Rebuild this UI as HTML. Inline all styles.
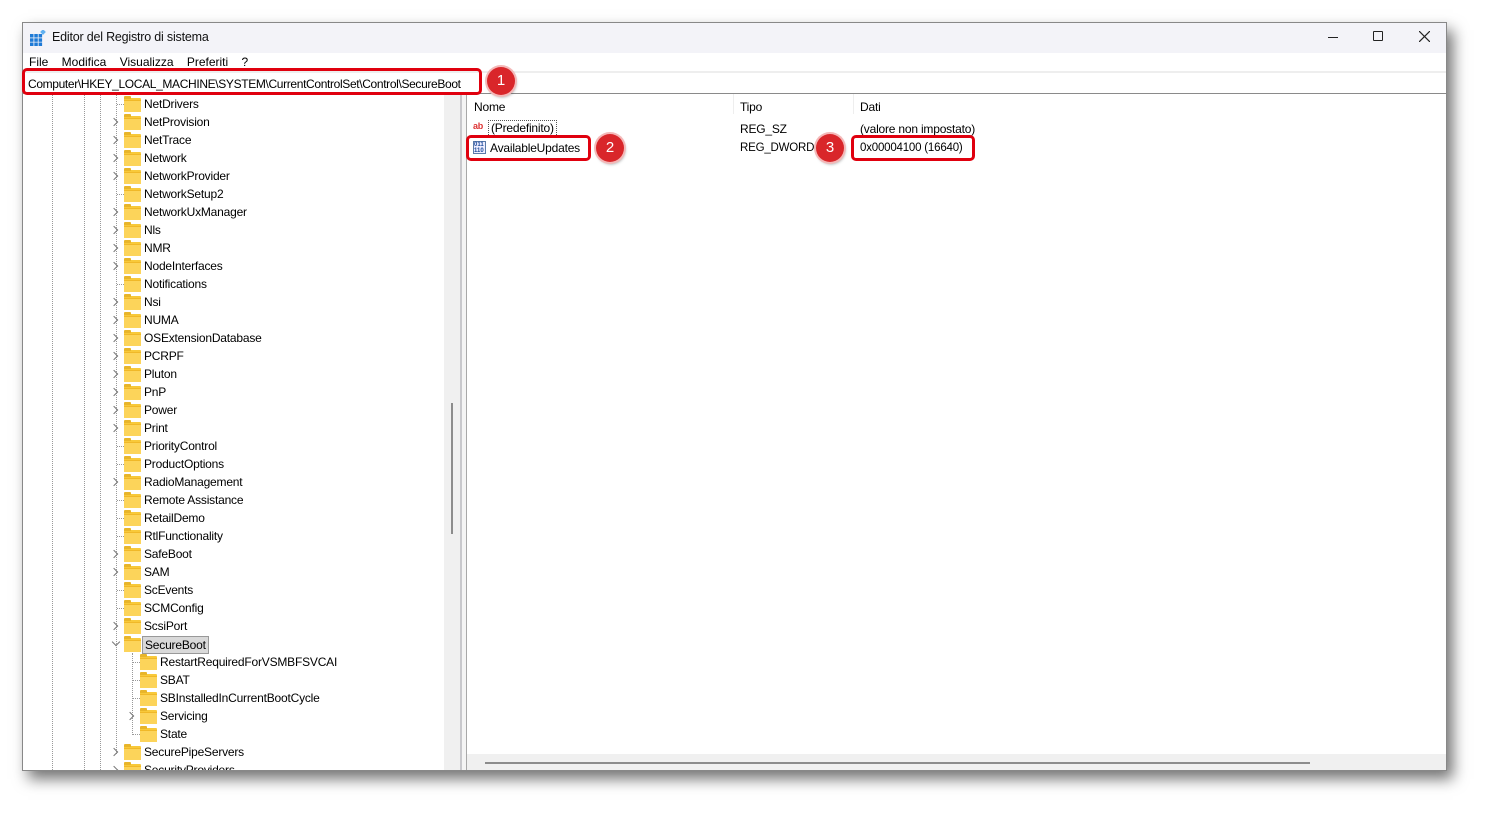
<!DOCTYPE html>
<html><head><meta charset="utf-8"><style>
*{margin:0;padding:0;box-sizing:border-box}
body{width:1490px;height:815px;background:#fff;position:relative;overflow:hidden;font-family:"Liberation Sans",sans-serif;font-size:12px;color:#000;letter-spacing:-0.2px}
.win{position:absolute;left:22px;top:22px;width:1425px;height:749px;background:#fff;box-shadow:6px 8px 14px rgba(0,0,0,.55);border:1px solid #888;overflow:hidden}
.abs{position:absolute}
.title{left:0;top:0;width:100%;height:30px;background:#f3f3f8}
.row{position:absolute;height:18px;line-height:18px;white-space:nowrap}
.fold{position:absolute;width:17px;height:13px;background:#f8c93a;border-radius:1px}
.fold:before{content:"";position:absolute;left:0;top:-2px;width:7px;height:3px;background:#e8b52a;border-radius:1px 1px 0 0}
.fold:after{content:"";position:absolute;left:0;top:2px;width:17px;height:11px;background:#fcd45a;border-top:1px solid #f0b828}
.arr{position:absolute;width:6px;height:6px;border-right:1px solid #777;border-bottom:1px solid #777;transform:rotate(-45deg)}
.vd{position:absolute;width:0;border-left:1px dotted #999}
.hd{position:absolute;height:0;width:7px;border-top:1px dotted #999}
.red{position:absolute;border:3px solid #e0000e;border-radius:5px}
.num{position:absolute;width:28px;height:28px;border-radius:50%;background:#d9262a;color:#fff;font-size:15px;text-align:center;line-height:28px;box-shadow:0 0 0 2px #f4b8b8,1px 2px 3px rgba(0,0,0,.4);letter-spacing:0}
</style></head><body>
<div class="win">
 <div class="abs title"></div>
 <svg class="abs" style="left:7px;top:7px" width="16" height="16" viewBox="0 0 16 16"><g fill="#1e7ad6"><rect x="0" y="4" width="3.5" height="3.5"/><rect x="4.3" y="4" width="3.5" height="3.5"/><rect x="8.6" y="4" width="3.5" height="3.5"/><rect x="0" y="8.3" width="3.5" height="3.5"/><rect x="4.3" y="8.3" width="3.5" height="3.5"/><rect x="8.6" y="8.3" width="3.5" height="3.5"/><rect x="0" y="12.5" width="3.5" height="3.5"/><rect x="4.3" y="12.5" width="3.5" height="3.5"/><rect x="8.6" y="12.5" width="3.5" height="3.5"/></g><rect x="11" y="0" width="4" height="4" fill="#5fb0f0" transform="rotate(45 13 2)"/></svg>
 <div class="abs" style="left:29px;top:7px;font-size:12.5px;color:#111">Editor del Registro di sistema</div>
 <div class="abs" style="left:1305px;top:14px;width:10px;height:1px;background:#222"></div>
 <div class="abs" style="left:1350px;top:8px;width:10px;height:10px;border:1px solid #222;border-radius:1px"></div>
 <svg class="abs" style="left:1396px;top:8px" width="11" height="11"><path d="M0 0L11 11M11 0L0 11" stroke="#222" stroke-width="1.2"/></svg>
 <div class="abs" style="left:6px;top:32px;font-size:12px;letter-spacing:0">File&nbsp;&nbsp;&nbsp;&nbsp;Modifica&nbsp;&nbsp;&nbsp;&nbsp;Visualizza&nbsp;&nbsp;&nbsp;&nbsp;Preferiti&nbsp;&nbsp;&nbsp;&nbsp;?</div>
 <div class="abs" style="left:0;top:48px;width:100%;height:2px;background:#eee"></div>
 <div class="abs" style="left:5px;top:54px;font-size:12px;letter-spacing:-0.35px">Computer\HKEY_LOCAL_MACHINE\SYSTEM\CurrentControlSet\Control\SecureBoot</div>
 <div class="abs" style="left:0;top:70px;width:100%;height:1px;background:#8a8a8a"></div>
 <div class="abs" style="left:421px;top:71px;width:16px;height:678px;background:#f0f0f0"></div>
 <div class="abs" style="left:428px;top:380px;width:2px;height:131px;background:#8c8c8c"></div>
 <div class="abs" style="left:437px;top:71px;width:2px;height:678px;background:#c8c8cc"></div>
 <div class="abs" style="left:439px;top:71px;width:4px;height:678px;background:#f4f4f4"></div>
 <div class="abs" style="left:443px;top:71px;width:1px;height:678px;background:#a8a8a8"></div>
 <div class="abs" style="left:444px;top:731px;width:981px;height:18px;background:#f0f0f0"></div>
 <div class="abs" style="left:462px;top:739px;width:825px;height:2px;background:#8c8c8c"></div>
 <div class="vd" style="left:29px;top:71px;height:678px"></div>
 <div class="vd" style="left:61px;top:71px;height:678px"></div>
 <div class="vd" style="left:77px;top:71px;height:678px"></div>
 <div class="vd" style="left:93px;top:71px;height:660px"></div>
 <div class="vd" style="left:109px;top:630px;height:82px"></div>
 <div id="tree"></div>
 <div class="abs" style="left:451px;top:77px">Nome</div>
 <div class="abs" style="left:710px;top:71px;width:1px;height:20px;background:#eee"></div>
 <div class="abs" style="left:717px;top:77px">Tipo</div>
 <div class="abs" style="left:830px;top:71px;width:1px;height:20px;background:#eee"></div>
 <div class="abs" style="left:837px;top:77px">Dati</div>
 <div class="abs" style="left:450px;top:98px;font-size:9px;font-weight:bold;color:#d33;line-height:10px">ab</div>
 <div class="abs" style="left:465px;top:97px;border:1px dotted #555;padding:0 2px;line-height:15px">(Predefinito)</div>
 <div class="abs" style="left:717px;top:99px">REG_SZ</div>
 <div class="abs" style="left:837px;top:99px">(valore non impostato)</div>
 <div class="abs" style="left:450px;top:118px;width:13px;height:13px;border:1px solid #5a7aa8;font-size:6px;line-height:6px;color:#1a4a9a;font-weight:bold;background:#eef;letter-spacing:0">011<br>110</div>
 <div class="abs" style="left:467px;top:118px">AvailableUpdates</div>
 <div class="abs" style="left:717px;top:119px;font-size:11.5px">REG_DWORD</div>
 <div class="abs" style="left:837px;top:119px;font-size:11.5px">0x00004100 (16640)</div>
</div>
<div class="red" style="left:22px;top:68px;width:460px;height:27px"></div>
<div class="num" style="left:487px;top:67px">1</div>
<div class="red" style="left:466px;top:135px;width:125px;height:26px"></div>
<div class="num" style="left:596px;top:134px">2</div>
<div class="num" style="left:816px;top:134px">3</div>
<div class="red" style="left:851px;top:135px;width:124px;height:26px"></div>
<script>
var rows=[["NetDrivers",0],["NetProvision",1],["NetTrace",1],["Network",1],["NetworkProvider",1],["NetworkSetup2",0],["NetworkUxManager",1],["Nls",1],["NMR",1],["NodeInterfaces",1],["Notifications",0],["Nsi",1],["NUMA",1],["OSExtensionDatabase",1],["PCRPF",1],["Pluton",1],["PnP",1],["Power",1],["Print",1],["PriorityControl",0],["ProductOptions",0],["RadioManagement",1],["Remote Assistance",0],["RetailDemo",0],["RtlFunctionality",0],["SafeBoot",1],["SAM",1],["ScEvents",0],["SCMConfig",0],["ScsiPort",1],["SecureBoot",2],["RestartRequiredForVSMBFSVCAI",0,1],["SBAT",0,1],["SBInstalledInCurrentBootCycle",0,1],["Servicing",1,1],["State",0,1],["SecurePipeServers",1],["SecurityProviders",1]];
var h="";
rows.forEach(function(r,i){var t=72+18*i,o=r[2]?16:0,c=t+9;
 h+='<div class="fold" style="left:'+(101+o)+'px;top:'+(t+3)+'px"></div>';
 if(r[1]==1)h+='<div class="arr" style="left:'+(88+o)+'px;top:'+(c-3)+'px"></div>';
 else if(r[1]==2)h+='<div class="arr" style="left:90px;top:'+(c-5)+'px;transform:rotate(45deg)"></div>';
 else h+='<div class="hd" style="left:'+(94+o)+'px;top:'+c+'px"></div>';
 var st=r[1]==2?'background:#d9d9d9;border:1px solid #999;padding:0 2px;left:'+(119+o)+'px;line-height:16px;top:'+(t+1)+'px':'left:'+(121+o)+'px;top:'+t+'px';
 h+='<div class="row" style="'+st+'">'+r[0]+'</div>';});
document.getElementById("tree").innerHTML=h;
</script>
</body></html>
